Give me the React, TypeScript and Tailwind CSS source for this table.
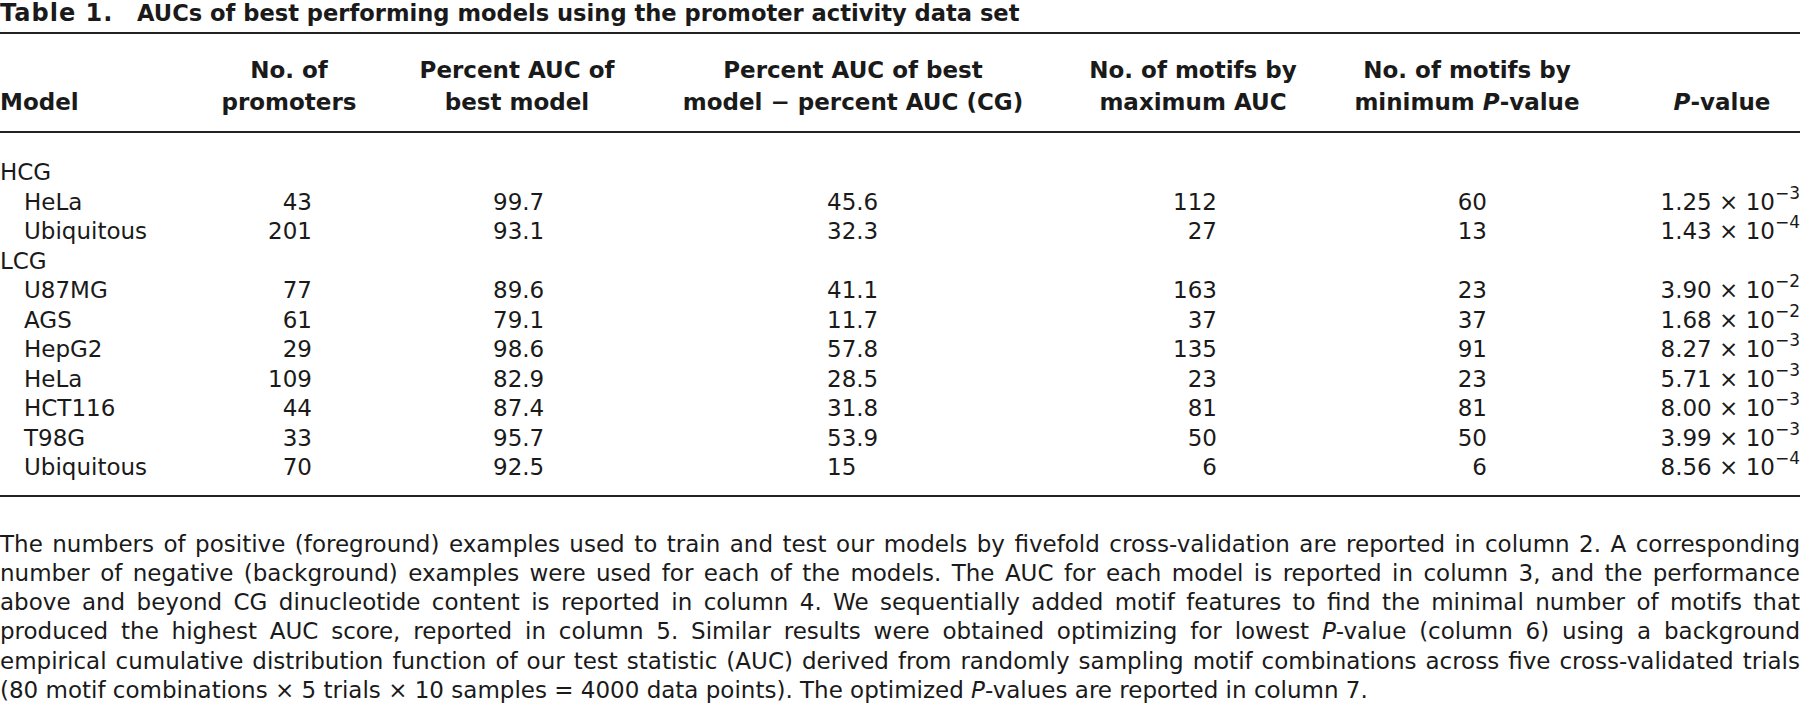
import { FC, ReactNode } from 'react'

type DataRow = {
  name: string
  promoters: string
  auc: string
  diff: string
  maxAuc: string
  minP: string
  p: [string, string]
}

type Group = {
  label: string
  rows: DataRow[]
}

const groups: Group[] = [
  {
    label: 'HCG',
    rows: [
      { name: 'HeLa', promoters: '43', auc: '99.7', diff: '45.6', maxAuc: '112', minP: '60', p: ['1.25', '3'] },
      { name: 'Ubiquitous', promoters: '201', auc: '93.1', diff: '32.3', maxAuc: '27', minP: '13', p: ['1.43', '4'] }
    ]
  },
  {
    label: 'LCG',
    rows: [
      { name: 'U87MG', promoters: '77', auc: '89.6', diff: '41.1', maxAuc: '163', minP: '23', p: ['3.90', '2'] },
      { name: 'AGS', promoters: '61', auc: '79.1', diff: '11.7', maxAuc: '37', minP: '37', p: ['1.68', '2'] },
      { name: 'HepG2', promoters: '29', auc: '98.6', diff: '57.8', maxAuc: '135', minP: '91', p: ['8.27', '3'] },
      { name: 'HeLa', promoters: '109', auc: '82.9', diff: '28.5', maxAuc: '23', minP: '23', p: ['5.71', '3'] },
      { name: 'HCT116', promoters: '44', auc: '87.4', diff: '31.8', maxAuc: '81', minP: '81', p: ['8.00', '3'] },
      { name: 'T98G', promoters: '33', auc: '95.7', diff: '53.9', maxAuc: '50', minP: '50', p: ['3.99', '3'] },
      { name: 'Ubiquitous', promoters: '70', auc: '92.5', diff: '15', maxAuc: '6', minP: '6', p: ['8.56', '4'] }
    ]
  }
]

// column grid shared by header and body
const cols = 'grid grid-cols-[210px_158px_298px_374px_306px_242px_212px]'

const Sci: FC<{ value: [string, string] }> = ({ value }) => (
  <span>
    {value[0]} × 10
    <sup className="relative -top-[11px] text-[17px]">−{value[1]}</sup>
  </span>
)

const FootLine: FC<{ children: ReactNode; last?: boolean }> = ({ children, last }) => (
  <p className={`leading-[29.3px] ${last ? 'text-left' : 'text-justify [text-align-last:justify]'}`}>{children}</p>
)

const App: FC = () => {
  return (
    <div className="h-[715px] w-[1800px] overflow-hidden bg-white font-['DejaVu_Sans',sans-serif] text-[23px] text-[#1a1a1a]">
      <div className="h-[32px] pb-[6px] text-[22.6px] font-bold leading-[26px] whitespace-nowrap">
        <span className="inline-block w-[137px] text-[24px] tracking-[1px]">Table 1.</span>
        <span>AUCs of best performing models using the promoter activity data set</span>
      </div>

      <div className={`${cols} border-y-2 border-[#222] pt-[20px] pb-[13px] font-bold leading-[32px]`}>
        <div className="flex items-end">Model</div>
        <div className="text-center">
          No. of
          <br />
          promoters
        </div>
        <div className="text-center">
          Percent AUC of
          <br />
          best model
        </div>
        <div className="text-center">
          Percent AUC of best
          <br />
          model − percent AUC (CG)
        </div>
        <div className="text-center">
          No. of motifs by
          <br />
          maximum AUC
        </div>
        <div className="text-center">
          No. of motifs by
          <br />
          minimum <i>P</i>-value
        </div>
        <div className="flex items-end justify-center pl-[56px]">
          <span>
            <i>P</i>-value
          </span>
        </div>
      </div>

      <div className="border-b-2 border-[#222] pt-[25px] pb-[12px] leading-[29.5px]">
        {groups.map((group) => (
          <div key={group.label}>
            <div>{group.label}</div>
            {group.rows.map((row, i) => (
              <div key={group.label + i} className={cols}>
                <div className="pl-[24px]">{row.name}</div>
                <div className="pr-[56px] text-right">{row.promoters}</div>
                <div className="pl-[125px]">{row.auc}</div>
                <div className="pl-[161px]">{row.diff}</div>
                <div className="pr-[129px] text-right">{row.maxAuc}</div>
                <div className="pr-[101px] text-right">{row.minP}</div>
                <div className="text-right">
                  <Sci value={row.p} />
                </div>
              </div>
            ))}
          </div>
        ))}
      </div>

      <div className="pt-[33px]">
        <FootLine>
          The numbers of positive (foreground) examples used to train and test our models by fivefold cross-validation are reported in column 2. A corresponding
        </FootLine>
        <FootLine>
          number of negative (background) examples were used for each of the models. The AUC for each model is reported in column 3, and the performance
        </FootLine>
        <FootLine>
          above and beyond CG dinucleotide content is reported in column 4. We sequentially added motif features to find the minimal number of motifs that
        </FootLine>
        <FootLine>
          produced the highest AUC score, reported in column 5. Similar results were obtained optimizing for lowest <i>P</i>-value (column 6) using a background
        </FootLine>
        <FootLine>
          empirical cumulative distribution function of our test statistic (AUC) derived from randomly sampling motif combinations across five cross-validated trials
        </FootLine>
        <FootLine last>
          (80 motif combinations × 5 trials × 10 samples = 4000 data points). The optimized <i>P</i>-values are reported in column 7.
        </FootLine>
      </div>
    </div>
  )
}

export default App
